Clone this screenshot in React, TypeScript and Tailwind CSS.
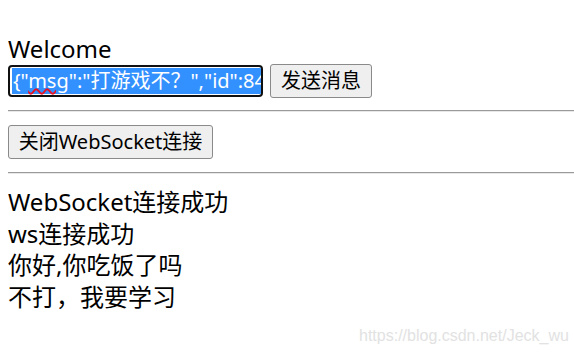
import { useEffect, useRef } from "react";

const messages = ["WebSocket连接成功", "ws连接成功", "你好,你吃饭了吗", "不打，我要学习"];

export default function App() {
  const boxRef = useRef<HTMLDivElement>(null);

  useEffect(() => {
    if (boxRef.current) boxRef.current.scrollLeft = 0;
  }, []);

  return (
    <div className="relative w-[574px] h-[357px] overflow-hidden bg-white text-black font-['Noto_Sans','Noto_Sans_CJK_SC',sans-serif] text-[24px]">
      <div className="pl-[8px] pt-[33px]">
        <div className="leading-[31px]">Welcome</div>

        {/* input + send */}
        <div className="flex items-center h-[34px]">
          <div
            ref={boxRef}
            className="w-[255px] h-[32px] border-2 border-[#101010] rounded-[4px] overflow-hidden flex items-center pl-[2px] text-[20px]"
          >
            <span className="whitespace-nowrap bg-[#3390ff] text-white leading-[26px] px-[1px]">
              {"{\""}
              <span className="underline decoration-wavy decoration-[#e81123] decoration-[1.5px] underline-offset-[0px]">msg</span>
              {"\":\"打游戏不？\",\"id\":84}"}
            </span>
          </div>
          <button className="ml-[7px] h-[34px] w-[102px] border border-[#8a8a8a] rounded-[3px] bg-[#efefef] text-[20px] leading-none">
            发送消息
          </button>
        </div>

        <hr className="mt-[12px] border-0 border-t-[1.5px] border-t-[#9a9a9a] border-b border-b-[#e8e8e8]" />

        <button className="mt-[13px] h-[34px] w-[205px] border border-[#8a8a8a] rounded-[3px] bg-[#efefef] text-[20px] leading-none">
          关闭WebSocket连接
        </button>

        <hr className="mt-[13px] border-0 border-t-[1.5px] border-t-[#9a9a9a] border-b border-b-[#e8e8e8]" />

        <div className="mt-[12px]">
          {messages.map((m) => (
            <div key={m} className="h-[31.5px] leading-[31.5px] whitespace-nowrap">
              {m}
            </div>
          ))}
        </div>
      </div>

      <div className="absolute left-[359px] top-[326px] text-[16px] leading-[20px] text-[#e2e2e2] font-['Liberation_Sans',sans-serif]">
        https://blog.csdn.net/Jeck_wu
      </div>
    </div>
  );
}
